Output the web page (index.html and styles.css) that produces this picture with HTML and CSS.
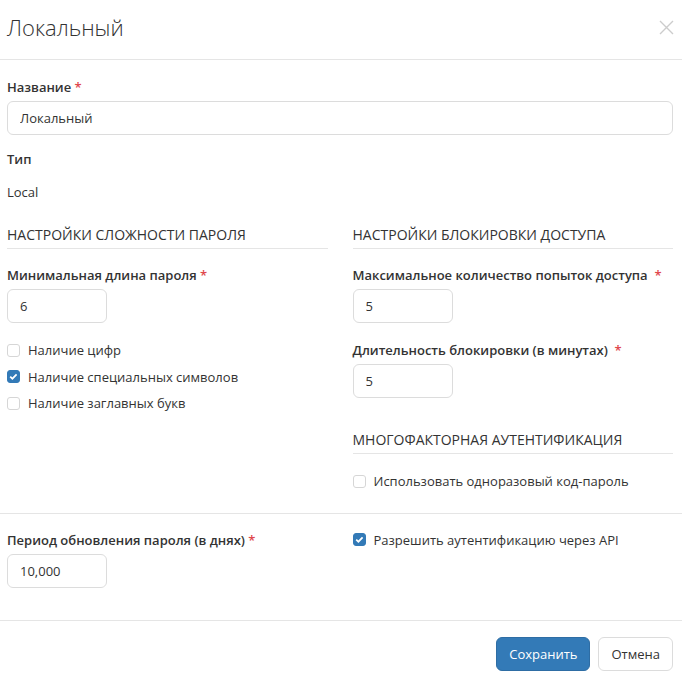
FILE: index.html
```html
<!DOCTYPE html>
<html lang="ru">
<head>
    <meta charset="UTF-8">
    <meta name="viewport" content="width=device-width, initial-scale=1.0">
    <title>Локальный</title>
    <link rel="stylesheet" href="styles.css">
</head>
<body>
    <div class="modal">
        <div class="modal-header">
            <h3 class="modal-title">Локальный</h3>
            <button class="close-btn" type="button" aria-label="Закрыть">
                <svg width="15" height="15" viewBox="0 0 15 15"><path d="M1 1 L14 14 M14 1 L1 14" stroke="#cccccc" stroke-width="1.4" fill="none"/></svg>
            </button>
        </div>

        <div class="modal-body">
            <div class="form-group">
                <label class="field-label">Название <span class="req">*</span></label>
                <input type="text" class="form-input" value="Локальный">
            </div>
            <div class="form-group">
                <label class="field-label">Тип</label>
                <div class="static-text">Local</div>
            </div>

            <div class="columns">
                <div class="col">
                    <h4 class="section-title">НАСТРОЙКИ СЛОЖНОСТИ ПАРОЛЯ</h4>
                    <div class="form-group">
                        <label class="field-label">Минимальная длина пароля <span class="req">*</span></label>
                        <input type="text" class="form-input short" value="6">
                    </div>
                    <label class="check"><span class="box"></span>Наличие цифр</label>
                    <label class="check"><span class="box checked"></span>Наличие специальных символов</label>
                    <label class="check"><span class="box"></span>Наличие заглавных букв</label>
                </div>
                <div class="col">
                    <h4 class="section-title">НАСТРОЙКИ БЛОКИРОВКИ ДОСТУПА</h4>
                    <div class="form-group">
                        <label class="field-label">Максимальное количество попыток доступа &nbsp;<span class="req">*</span></label>
                        <input type="text" class="form-input short" value="5">
                    </div>
                    <div class="form-group">
                        <label class="field-label">Длительность блокировки (в минутах) &nbsp;<span class="req">*</span></label>
                        <input type="text" class="form-input short" value="5">
                    </div>
                    <h4 class="section-title mfa">МНОГОФАКТОРНАЯ АУТЕНТИФИКАЦИЯ</h4>
                    <label class="check"><span class="box"></span>Использовать одноразовый код-пароль</label>
                </div>
            </div>

            <hr class="divider">

            <div class="columns">
                <div class="col">
                    <div class="form-group">
                        <label class="field-label">Период обновления пароля (в днях) <span class="req">*</span></label>
                        <input type="text" class="form-input short" value="10,000">
                    </div>
                </div>
                <div class="col">
                    <label class="check api"><span class="box checked"></span>Разрешить аутентификацию через API</label>
                </div>
            </div>
        </div>

        <div class="modal-footer">
            <button class="btn btn-primary">Сохранить</button>
            <button class="btn btn-default">Отмена</button>
        </div>
    </div>
</body>
</html>
```

FILE: styles.css
```css
* {
    margin: 0;
    padding: 0;
    box-sizing: border-box;
}
body {
    background: #fff;
    font-family: "Open Sans", "Noto Sans", sans-serif;
    font-size: 13px;
    line-height: 18px;
    color: #333;
}
.modal {
    width: 682px;
}
.modal-header {
    height: 60px;
    border-bottom: 1px solid #e5e5e5;
    display: flex;
    align-items: center;
    justify-content: space-between;
    padding: 0 8px 5px 7px;
}
.modal-title {
    font-size: 22px;
    font-weight: 300;
    color: #333;
    line-height: 30px;
}
.close-btn {
    background: none;
    border: none;
    width: 15px;
    height: 15px;
    cursor: pointer;
}
.modal-body {
    padding: 18px 9px 0 7px;
}
.form-group {
    margin-bottom: 15px;
}
.col .form-group {
    margin-bottom: 18px;
}
.field-label {
    display: block;
    font-weight: 600;
    margin-bottom: 5px;
}
.req {
    color: #e0474c;
    font-weight: 600;
}
.form-input {
    display: block;
    width: 100%;
    height: 34px;
    padding: 6px 12px;
    border: 1px solid #dcdcdc;
    border-radius: 6px;
    font-family: inherit;
    font-size: 13px;
    color: #333;
}
.form-input.short {
    width: 100px;
}
.static-text {
    margin-top: 15px;
}
.columns {
    display: grid;
    grid-template-columns: 1fr 1fr;
    column-gap: 25px;
}
.section-title {
    font-size: 14px;
    font-weight: 400;
    line-height: 18px;
    padding-bottom: 4px;
    border-bottom: 1px solid #e5e5e5;
    margin-top: 10px;
    margin-bottom: 17px;
}
.section-title.mfa {
    margin-top: 33px;
    margin-bottom: 18px;
}
.check {
    display: flex;
    align-items: center;
    height: 18px;
    margin-bottom: 8.5px;
    color: #333;
}
.box {
    width: 13px;
    height: 13px;
    border: 1px solid #d6d6d6;
    border-radius: 3px;
    margin-right: 8px;
    flex-shrink: 0;
}
.box.checked {
    border-color: #337ab7;
    background: #337ab7 url("data:image/svg+xml,%3Csvg xmlns='http://www.w3.org/2000/svg' width='13' height='13' viewBox='0 0 13 13'%3E%3Cpath d='M3.2 6.6 L5.4 8.7 L9.6 4.3' stroke='white' stroke-width='1.7' fill='none'/%3E%3C/svg%3E") center / 13px 13px no-repeat;
}
.divider {
    border: none;
    border-top: 1px solid #e5e5e5;
    margin: 14px -9px 17px -7px;
}
.check.api {
    margin-top: 0;
}
.modal-footer {
    border-top: 1px solid #e5e5e5;
    margin-top: 14px;
    padding: 16px 9px 0 7px;
    display: flex;
    justify-content: flex-end;
    gap: 8px;
}
.btn {
    height: 34px;
    padding: 0 12px;
    border-radius: 6px;
    font-family: inherit;
    font-size: 13px;
    cursor: pointer;
}
.btn-primary {
    background: #337ab7;
    border: 1px solid #2e6da4;
    color: #fff;
}
.btn-default {
    background: #fff;
    border: 1px solid #dcdcdc;
    color: #333;
}
```
